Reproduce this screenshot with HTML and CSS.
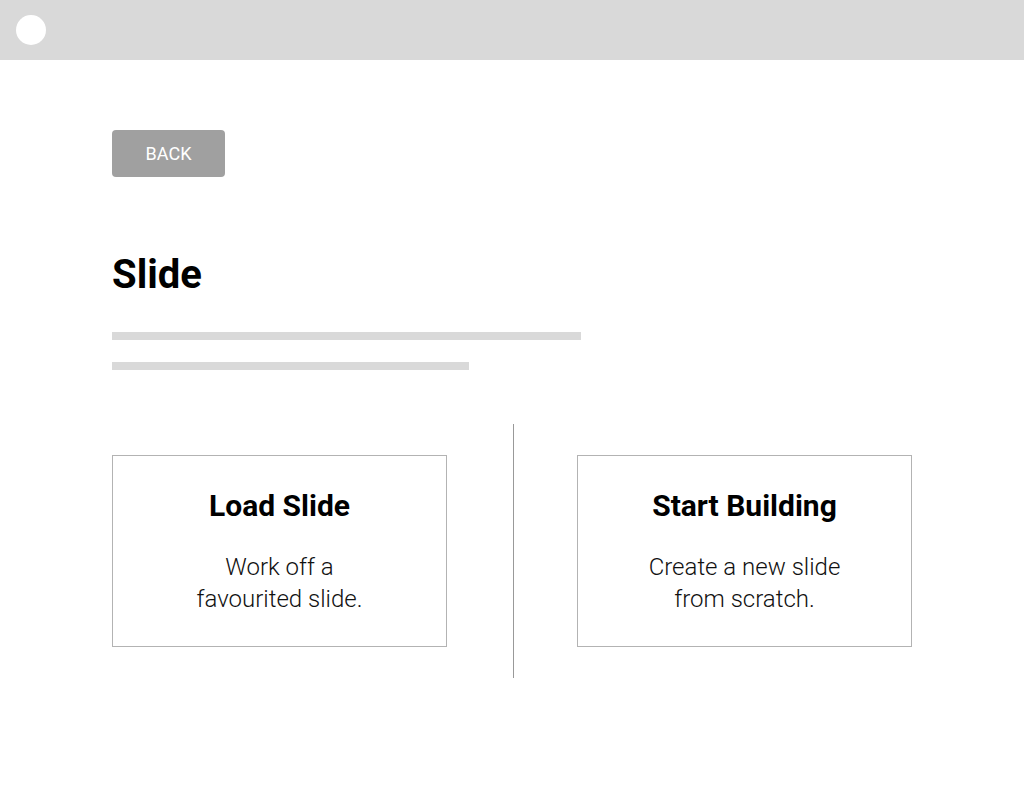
FILE: index.html
```html
<!DOCTYPE html>
<html lang="en">
<head>
<meta charset="utf-8">
<title>Slide</title>
<link rel="stylesheet" href="styles.css">
</head>
<body>
<header class="topbar">
  <span class="avatar"></span>
</header>
<main class="page">
  <button class="back-btn" type="button">BACK</button>
  <h1 class="title">Slide</h1>
  <div class="placeholder placeholder-long"></div>
  <div class="placeholder placeholder-short"></div>
  <section class="choices">
    <div class="card">
      <h2 class="card-title">Load Slide</h2>
      <p class="card-text">Work off a<br>favourited slide.</p>
    </div>
    <div class="divider"></div>
    <div class="card">
      <h2 class="card-title">Start Building</h2>
      <p class="card-text">Create a new slide<br>from scratch.</p>
    </div>
  </section>
</main>
</body>
</html>
```

FILE: styles.css
```css
* { box-sizing: border-box; }

html, body {
  margin: 0;
  padding: 0;
  background: #ffffff;
  font-family: Roboto, "Liberation Sans", sans-serif;
  color: #000;
}

.topbar {
  height: 60px;
  background: #d9d9d9;
  display: flex;
  align-items: center;
  padding-left: 16px;
}

.avatar {
  width: 30px;
  height: 30px;
  border-radius: 50%;
  background: #ffffff;
}

.page {
  padding: 70px 112px 0 112px;
  width: 912px;
}

.back-btn {
  display: block;
  width: 113px;
  height: 47px;
  border: none;
  border-radius: 4px;
  background: #a0a0a0;
  color: #ffffff;
  font-family: Roboto, "Liberation Sans", sans-serif;
  font-size: 18px;
  line-height: 18px;
  font-weight: 400;
  padding: 0;
}

.title {
  margin: 78px 0 0 0;
  font-size: 40px;
  line-height: 40px;
  font-weight: 700;
}

.placeholder {
  height: 8px;
  background: #d9d9d9;
}

.placeholder-long {
  width: 469px;
  margin-top: 37px;
}

.placeholder-short {
  width: 357px;
  margin-top: 22px;
}

.choices {
  margin-top: 54px;
  display: grid;
  grid-template-columns: 335px 1fr 335px;
  align-items: center;
  width: 800px;
}

.divider {
  justify-self: start;
  margin-left: 66px;
  width: 1px;
  height: 254px;
  background: #999999;
}

.card {
  height: 192px;
  border: 1px solid #b3b3b3;
  padding-top: 32px;
  display: flex;
  flex-direction: column;
  align-items: center;
  text-align: center;
}

.card-title {
  margin: 0;
  font-size: 30px;
  line-height: 36px;
  font-weight: 700;
}

.card-text {
  margin: 27px 0 0 0;
  font-size: 24px;
  line-height: 32px;
  font-weight: 300;
  color: #111;
}
```
